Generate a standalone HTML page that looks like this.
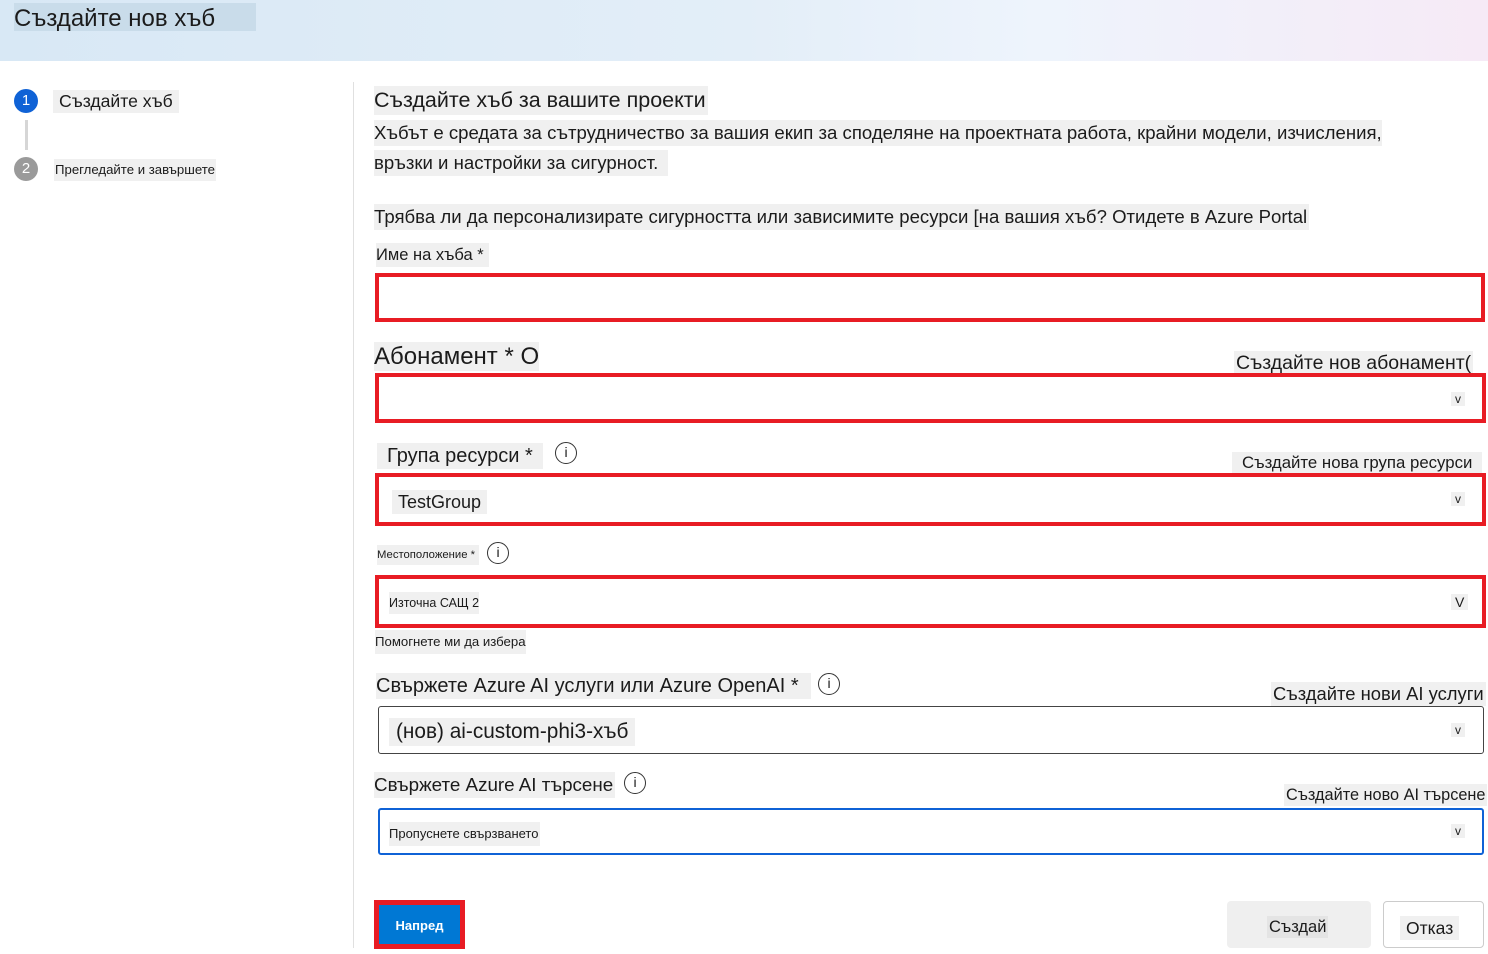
<!DOCTYPE html>
<html><head><meta charset="utf-8"><style>
*{margin:0;padding:0;box-sizing:border-box}
body{width:1488px;height:954px;position:relative;background:#fff;font-family:"Liberation Sans","DejaVu Sans",sans-serif;color:#1b1b1b;overflow:hidden}
.a{position:absolute;white-space:nowrap}
.h{background:#f0f0f0}
.box{position:absolute;border:4px solid #e81c24}
.v{position:absolute;font-size:12px;background:#f0f0f0;padding:0 4px}
.i{position:absolute;width:22px;height:22px;border:1.5px solid #333;border-radius:50%;font-size:14px;text-align:center;line-height:19px;font-family:"Liberation Sans",sans-serif}
</style></head><body>
<div class="a" style="left:0;top:0;width:1488px;height:61px;background:linear-gradient(90deg,#d8e8f5 0%,#e3eef8 50%,#eef4fc 70%,#f6eaf6 100%)"></div>
<div class="a" style="left:14px;top:3px;width:242px;height:28px;background:#c9dcea;font-size:24px;line-height:32px">Създайте нов хъб</div>

<div class="a" style="left:14px;top:89px;width:24px;height:24px;border-radius:50%;background:#0f62d6;color:#fff;font-size:15px;text-align:center;line-height:24px">1</div>
<div class="a h" style="left:53px;top:90px;padding:0 6px;font-size:17.6px;line-height:23px">Създайте хъб</div>
<div class="a" style="left:25px;top:120px;width:3px;height:30px;background:#d6d6d6"></div>
<div class="a" style="left:14px;top:157px;width:24px;height:24px;border-radius:50%;background:#9a9a9a;color:#fff;font-size:15px;text-align:center;line-height:24px">2</div>
<div class="a h" style="left:54px;top:159px;padding:0 1px;font-size:13.2px;line-height:22px">Прегледайте и завършете</div>
<div class="a" style="left:353px;top:82px;width:1px;height:866px;background:#e0e0e0"></div>

<div class="a h" style="left:374px;top:86px;font-size:21.5px;line-height:29px;padding-right:2px">Създайте хъб за вашите проекти</div>
<div class="a h" style="left:374px;top:120px;font-size:18.6px;line-height:26px">Хъбът е средата за сътрудничество за вашия екип за споделяне на проектната работа, крайни модели, изчисления,</div>
<div class="a h" style="left:374px;top:150px;font-size:18.6px;line-height:26px;padding-right:10px">връзки и настройки за сигурност.</div>
<div class="a h" style="left:374px;top:204px;font-size:18.6px;line-height:26px;padding-right:2px">Трябва ли да персонализирате сигурността или зависимите ресурси [на вашия хъб? Отидете в Azure Portal</div>

<div class="a h" style="left:376px;top:243px;font-size:16.5px;line-height:24px;padding-right:5px">Име на хъба *</div>
<div class="box" style="left:375px;top:273px;width:1110px;height:49px"></div>

<div class="a h" style="left:374px;top:342px;font-size:24px;line-height:29px">Абонамент * О</div>
<div class="a h" style="left:1234px;top:351px;font-size:19.5px;line-height:24px;padding:0 2px">Създайте нов абонамент(</div>
<div class="box" style="left:375px;top:373px;width:1111px;height:50px"></div>
<div class="v" style="left:1451px;top:392px">v</div>

<div class="a h" style="left:377px;top:443px;font-size:20px;line-height:26px;padding:0 10px">Група ресурси *</div>
<div class="i" style="left:555px;top:442px">i</div>
<div class="a h" style="left:1232px;top:452px;font-size:16.8px;line-height:22px;padding:0 10px">Създайте нова група ресурси</div>
<div class="box" style="left:375px;top:473px;width:1111px;height:53px"></div>
<div class="a h" style="left:392px;top:490px;font-size:18px;line-height:24px;padding:0 6px">TestGroup</div>
<div class="v" style="left:1451px;top:492px">v</div>

<div class="a h" style="left:377px;top:545px;font-size:11.3px;line-height:20px;padding-right:4px">Местоположение *</div>
<div class="i" style="left:487px;top:542px">i</div>
<div class="box" style="left:375px;top:575px;width:1111px;height:53px"></div>
<div class="a h" style="left:389px;top:592px;font-size:12.5px;line-height:22px">Източна САЩ 2</div>
<div class="v" style="left:1451px;top:594px;font-size:14px">V</div>
<div class="a h" style="left:375px;top:630px;font-size:13.2px;line-height:24px">Помогнете ми да избера</div>

<div class="a h" style="left:376px;top:673px;font-size:20px;line-height:26px;padding-right:12px">Свържете Azure AI услуги или Azure OpenAI *</div>
<div class="i" style="left:818px;top:673px">i</div>
<div class="a h" style="left:1271px;top:682px;font-size:18.4px;line-height:24px;padding:0 2px">Създайте нови AI услуги</div>
<div class="a" style="left:378px;top:706px;width:1106px;height:48px;border:1px solid #444;border-radius:3px"></div>
<div class="a h" style="left:389px;top:718px;font-size:20.8px;line-height:28px;padding:0 7px">(нов) ai-custom-phi3-хъб</div>
<div class="v" style="left:1451px;top:723px">v</div>

<div class="a h" style="left:374px;top:772px;font-size:18.8px;line-height:26px;padding-right:2px">Свържете Azure AI търсене</div>
<div class="i" style="left:624px;top:772px">i</div>
<div class="a h" style="left:1284px;top:784px;font-size:16.3px;line-height:22px;padding:0 2px">Създайте ново AI търсене</div>
<div class="a" style="left:378px;top:808px;width:1106px;height:47px;border:2.5px solid #0f62d6;border-radius:3px"></div>
<div class="a h" style="left:389px;top:822px;font-size:13px;line-height:24px;padding-right:2px">Пропуснете свързването</div>
<div class="v" style="left:1451px;top:824px">v</div>

<div class="a" style="left:374px;top:900px;width:91px;height:49px;background:#e81c24"></div>
<div class="a" style="left:379px;top:905px;width:81px;height:39px;background:#0078d4;color:#fff;font-size:13px;text-align:center;line-height:41px;font-weight:bold">Напред</div>
<div class="a" style="left:1227px;top:901px;width:144px;height:47px;background:#efefef;border-radius:4px"></div>
<div class="a" style="left:1267px;top:916px;font-size:16.5px;line-height:22px;background:#e4e4e4;padding:0 2px">Създай</div>
<div class="a" style="left:1383px;top:901px;width:101px;height:47px;border:1px solid #ccc;border-radius:4px"></div>
<div class="a h" style="left:1400px;top:916px;font-size:17.5px;line-height:24px;padding:0 6px">Отказ</div>
</body></html>
